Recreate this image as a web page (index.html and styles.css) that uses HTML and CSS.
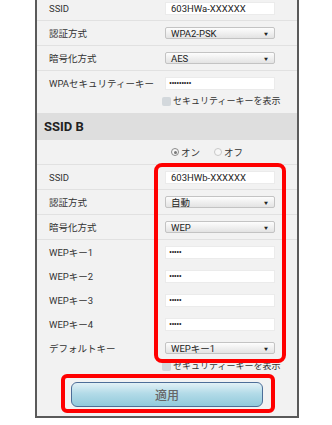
FILE: index.html
```html
<!DOCTYPE html>
<html lang="ja">
<head>
<meta charset="utf-8">
<link rel="stylesheet" href="styles.css">
</head>
<body>
<div class="stage">
  <div class="screen">
    <div class="content">
      <div class="row"><span class="label">SSID</span><div class="field input">603HWa-XXXXXX</div></div>
      <div class="row"><span class="label">認証方式</span><div class="field select">WPA2-PSK<span class="arrow">▼</span></div></div>
      <div class="row"><span class="label">暗号化方式</span><div class="field select">AES<span class="arrow">▼</span></div></div>
      <div class="row plain tall"><span class="label">WPAセキュリティーキー</span><div class="field input dots">•••••••••</div></div>
      <div class="row plain check-row"><span class="label"></span><span class="checkbox"></span><span class="check-text">セキュリティーキーを表示</span></div>

      <div class="section-head">SSID B</div>

      <div class="row"><span class="label"></span>
        <span class="radio on"></span><span class="radio-text">オン</span>
        <span class="radio"></span><span class="radio-text">オフ</span>
      </div>
      <div class="row"><span class="label">SSID</span><div class="field input">603HWb-XXXXXX</div></div>
      <div class="row"><span class="label">認証方式</span><div class="field select">自動<span class="arrow">▼</span></div></div>
      <div class="row"><span class="label">暗号化方式</span><div class="field select">WEP<span class="arrow">▼</span></div></div>
      <div class="row plain tall"><span class="label">WEPキー1</span><div class="field input dots">•••••</div></div>
      <div class="row plain tall"><span class="label">WEPキー2</span><div class="field input dots">•••••</div></div>
      <div class="row plain tall"><span class="label">WEPキー3</span><div class="field input dots">•••••</div></div>
      <div class="row plain tall"><span class="label">WEPキー4</span><div class="field input dots">•••••</div></div>
      <div class="row plain tall"><span class="label">デフォルトキー</span><div class="field select">WEPキー1<span class="arrow">▼</span></div></div>
      <div class="row plain check-row short"><span class="label"></span><span class="checkbox"></span><span class="check-text">セキュリティーキーを表示</span></div>

      <div class="button-area"><div class="apply">適用</div></div>
    </div>
  </div>
  <div class="mark mark-fields"></div>
  <div class="mark mark-button"></div>
</div>
</body>
</html>
```

FILE: styles.css
```css
html, body {
  margin: 0;
  padding: 0;
  background: #ffffff;
}
body {
  font-family: Roboto, "Noto Sans CJK JP", sans-serif;
  color: #333;
}
.stage {
  position: relative;
  width: 332px;
  height: 425px;
}
.screen {
  margin-left: 35px;
  width: 260px;
  height: 416px;
  border: 2px solid #5a5a5a;
  border-top: 0;
  overflow: hidden;
  background: #f2f2f2;
}
.content {
  margin-top: -4px;
}
.row {
  box-sizing: border-box;
  display: flex;
  align-items: center;
  height: 25px;
  border-bottom: 1px solid #e1e1e1;
  padding-left: 12px;
  font-size: 9.5px;
}
.row.plain {
  border-bottom: 0;
}
.row.tall {
  height: 24px;
}
.row.check-row {
  height: 18px;
  align-items: flex-start;
  padding-top: 2px;
}
.row.check-row.short {
  height: 14px;
}
.label {
  width: 116px;
  flex: none;
  color: #333;
  white-space: nowrap;
}
.field {
  box-sizing: border-box;
  width: 110px;
  height: 13px;
  display: flex;
  align-items: center;
  padding-left: 5px;
  font-size: 9.5px;
  color: #222;
  position: relative;
}
.input {
  background: #ffffff;
  border: 1px solid #ebebeb;
}
.input.dots {
  font-size: 9px;
  letter-spacing: -0.6px;
  color: #222;
  padding-left: 3px;
}
.select {
  border: 1px solid #c3c3c3;
  border-radius: 2px;
  background: linear-gradient(#fdfdfd, #e3e3e3);
  height: 12px;
}
.arrow {
  position: absolute;
  right: 6px;
  top: 3px;
  font-size: 4px;
  color: #222;
}
.checkbox {
  margin-left: -3px;
  width: 9px;
  height: 9px;
  border-radius: 2px;
  background: #d3d8dc;
  flex: none;
}
.check-text {
  margin-left: 2px;
  color: #333;
  line-height: 9px;
  font-size: 9px;
}
.section-head {
  height: 27px;
  display: flex;
  align-items: center;
  padding-left: 7px;
  background: #dedede;
  font-size: 13px;
  font-weight: 700;
  color: #222;
}
.radio {
  box-sizing: border-box;
  width: 8px;
  height: 8px;
  border-radius: 50%;
  border: 1px solid #c8c8c8;
  background: #f7f7f7;
  flex: none;
  margin-left: 6px;
  margin-right: 2px;
  position: relative;
}
.radio.on {
  margin-left: 6px;
  border-color: #8a8a8a;
}
.radio.on::after {
  content: "";
  position: absolute;
  left: 1.5px;
  top: 1.5px;
  width: 3px;
  height: 3px;
  border-radius: 50%;
  background: #777;
}
.radio-text {
  margin-right: 8px;
  color: #333;
}
.button-area {
  padding-top: 8px;
}
.apply {
  box-sizing: border-box;
  width: 192px;
  height: 25px;
  margin: 0 auto;
  border: 1.5px solid #4d6e98;
  border-radius: 6px;
  background: linear-gradient(#e2f1f6, #b3dbe8 45%, #92cadb);
  display: flex;
  align-items: center;
  justify-content: center;
  font-size: 12px;
  font-weight: 500;
  color: #666;
}
.mark {
  position: absolute;
  box-sizing: border-box;
  border: 4px solid #ff0000;
}
.mark-fields {
  left: 154px;
  top: 163px;
  width: 132px;
  height: 200px;
  border-radius: 8px;
}
.mark-button {
  left: 61px;
  top: 374px;
  width: 214px;
  height: 39px;
  border-radius: 6px;
}
```
